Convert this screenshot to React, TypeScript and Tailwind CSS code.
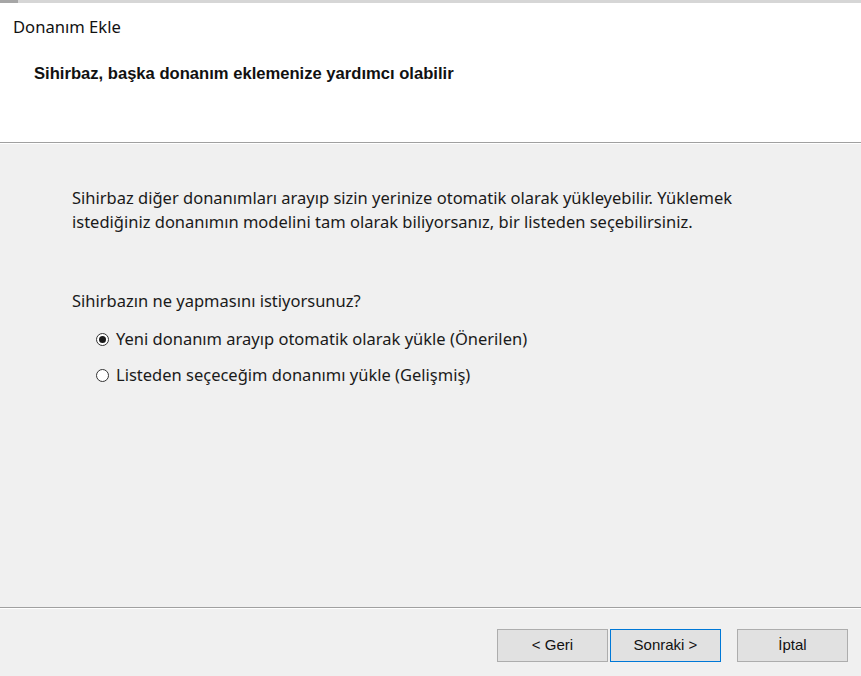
import React, { useState } from 'react';

const segoe = { fontFamily: '"Noto Sans", "Open Sans", sans-serif' };

function Radio({ checked, label, onClick }: { checked: boolean; label: string; onClick: () => void }) {
  return (
    <div className="flex items-center h-[24px] cursor-default" onClick={onClick}>
      <span className="w-[13px] h-[13px] rounded-full border border-[#333] bg-white flex items-center justify-center mr-[7px]">
        {checked && <span className="w-[7px] h-[7px] rounded-full bg-[#1a1a1a]" />}
      </span>
      <span>{label}</span>
    </div>
  );
}

export default function App() {
  const [choice, setChoice] = useState(0);

  return (
    <div className="w-[861px] h-[676px] flex flex-col bg-[#f0f0f0] overflow-hidden text-[#000]">
      {/* top strip */}
      <div className="h-[3px] flex">
        <div className="w-[18px] bg-[#a6a6a6]" />
        <div className="flex-1 bg-[#d6d6d6]" />
      </div>

      {/* header */}
      <div className="h-[140px] bg-white border-b border-[#a0a0a0] pt-[14px]">
        <div className="pl-[13px] text-[16.6px] leading-[20px] text-[#111]" style={segoe}>
          Donanım Ekle
        </div>
        <div
          className="pl-[34px] mt-[27px] text-[16.6px] leading-[20px] font-bold text-[#111]"
          style={{ fontFamily: '"Liberation Sans", Arial, sans-serif' }}
        >
          Sihirbaz, başka donanım eklemenize yardımcı olabilir
        </div>
      </div>
      <div className="h-px bg-white" />

      {/* body */}
      <div className="flex-1 pl-[72px] pt-[42px] text-[16.5px] text-[#1a1a1a]" style={segoe}>
        <p className="leading-[24px] w-[690px]">
          Sihirbaz diğer donanımları arayıp sizin yerinize otomatik olarak yükleyebilir. Yüklemek
          istediğiniz donanımın modelini tam olarak biliyorsanız, bir listeden seçebilirsiniz.
        </p>
        <p className="leading-[24px] mt-[55px]">Sihirbazın ne yapmasını istiyorsunuz?</p>
        <div className="pl-[24px] mt-[14px] flex flex-col gap-[12px]">
          <Radio checked={choice === 0} onClick={() => setChoice(0)} label="Yeni donanım arayıp otomatik olarak yükle (Önerilen)" />
          <Radio checked={choice === 1} onClick={() => setChoice(1)} label="Listeden seçeceğim donanımı yükle (Gelişmiş)" />
        </div>
      </div>

      {/* footer */}
      <div className="h-px bg-[#a0a0a0]" />
      <div className="h-px bg-white" />
      <div
        className="h-[67px] flex items-start pt-[20px] pl-[497px] text-[15px] text-[#111]"
        style={{ fontFamily: '"Liberation Sans", Arial, sans-serif' }}
      >
        <button className="w-[111px] h-[33px] bg-[#e1e1e1] border border-[#adadad]">&lt; Geri</button>
        <button className="w-[111px] h-[33px] bg-[#e1e1e1] border border-[#0078d7] ml-[2px]">Sonraki &gt;</button>
        <button className="w-[111px] h-[33px] bg-[#e1e1e1] border border-[#adadad] ml-[16px]">İptal</button>
      </div>
    </div>
  );
}
